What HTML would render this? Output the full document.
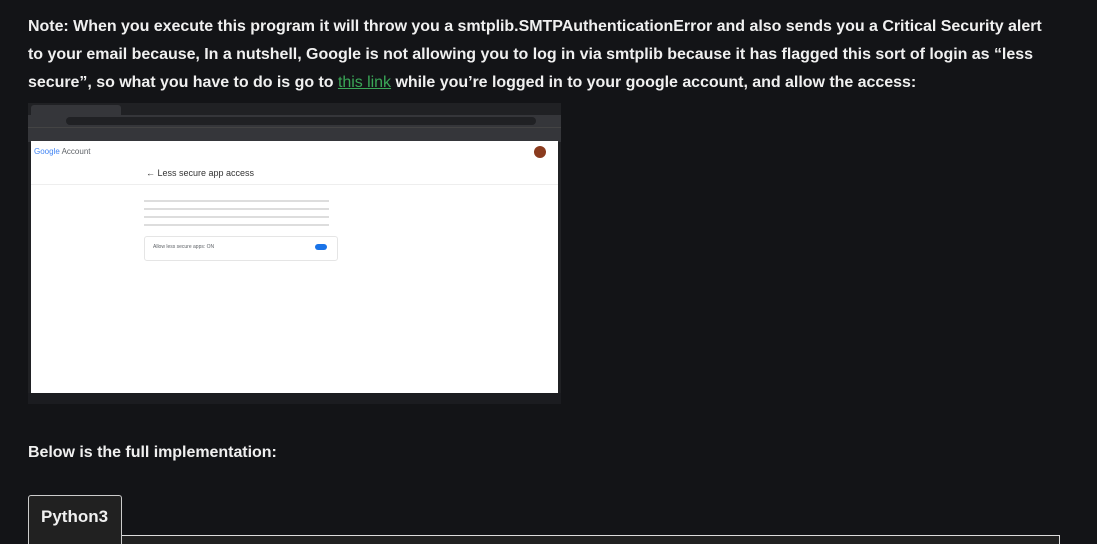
<!DOCTYPE html>
<html style="overflow:hidden"><head><meta charset="utf-8"><style>
html,body{overflow:hidden}
body{margin:0;background:#131417;width:1097px;height:544px;font-family:"Liberation Sans",sans-serif;color:#f0f0f0;position:relative}
.p{position:absolute;left:28px;font-size:16px;letter-spacing:-0.03px;line-height:28px;white-space:nowrap;font-weight:600}
.p b{font-weight:700}
a{color:#3aa757;text-decoration:underline;font-weight:400}
.shot{position:absolute;left:28px;top:103px;width:533px;height:301px;background:#202124}
.tabs{position:absolute;left:0;top:0;width:533px;height:12px;background:#202124}
.url{position:absolute;left:0;top:12px;width:533px;height:12px;background:#35363a}
.bm{position:absolute;left:0;top:24px;width:533px;height:14px;background:#35363a;border-top:1px solid #444}
.page{position:absolute;left:3px;top:38px;width:527px;height:252px;background:#fff}
.task{position:absolute;left:0;top:290px;width:533px;height:11px;background:#1b1c20}
.g{font-size:7px;position:absolute;color:#5f6368}
.tab{position:absolute;left:28px;top:495px;width:94px;height:49px;border:1px solid #ccc;border-bottom:none;border-radius:3px 3px 0 0;background:#212121;box-sizing:border-box;font-size:17px;font-weight:600;padding:11px 0 0 12px;color:#f0f0f0}
.panel{position:absolute;left:121px;top:535px;width:938px;height:9px;border-top:1px solid #ddd;border-right:1px solid #ddd;background:#212121}
</style></head><body>
<div class="p" style="top:13px"><b>Note:</b> When you execute this program it will throw you a smtplib.SMTPAuthenticationError and also sends you a Critical Security alert</div>
<div class="p" style="top:41px">to your email because, In a nutshell, Google is not allowing you to log in via smtplib because it has flagged this sort of login as “less</div>
<div class="p" style="top:69px">secure”, so what you have to do is go to <a>this link</a> while you’re logged in to your google account, and allow the access:</div>
<div class="shot">
<div class="tabs"><div style="position:absolute;left:3px;top:2px;width:90px;height:10px;background:#35363a;border-radius:3px 3px 0 0"></div></div>
<div class="url"><div style="position:absolute;left:38px;top:2px;width:470px;height:8px;background:#202124;border-radius:4px"></div></div>
<div class="bm"></div>
<div class="page">
<div class="g" style="left:3px;top:6px;font-size:8px;color:#5f6368"><span style="color:#4285f4">Google</span> Account</div>
<div style="position:absolute;right:12px;top:5px;width:12px;height:12px;border-radius:50%;background:#8a3b1e"></div>
<div class="g" style="left:115px;top:27px;font-size:9px;color:#333">← Less secure app access</div>
<div style="position:absolute;left:0;top:43px;width:527px;height:1px;background:#eee"></div>
<div style="position:absolute;left:113px;top:56px;width:185px;height:30px;background:repeating-linear-gradient(#fff 0,#fff 3px,#ddd 3px,#ddd 5px,#fff 5px,#fff 8px)"></div>
<div style="position:absolute;left:113px;top:95px;width:192px;height:23px;border:1px solid #e5e5e5;border-radius:3px"><span class="g" style="left:8px;top:7px;font-size:5px">Allow less secure apps: ON</span><div style="position:absolute;right:10px;top:7px;width:12px;height:6px;border-radius:3px;background:#1a73e8"></div></div>
</div>
<div class="task"></div>
</div>
<div class="p" style="top:439px">Below is the full implementation:</div>
<div class="panel"></div>
<div class="tab">Python3</div>
</body></html>
